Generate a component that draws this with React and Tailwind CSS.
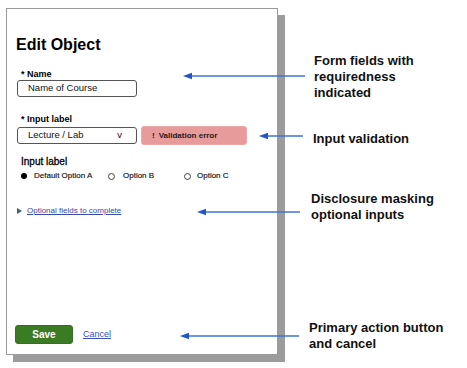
import React from "react";

function Arrow({ x1, x2, y }) {
  return (
    <g>
      <line x1={x1} y1={y} x2={x2 + 6} y2={y} stroke="#3d74d6" strokeWidth="1.3" />
      <polygon points={`${x2},${y} ${x2 + 9},${y - 3.2} ${x2 + 9},${y + 3.2}`} fill="#1f56c8" />
    </g>
  );
}

function Radio({ checked, label, width, gap }) {
  return (
    <div className={`flex items-center ${width}`}>
      {checked ? (
        <span className="block w-[6px] h-[6px] rounded-full bg-black" />
      ) : (
        <span className="block w-[7px] h-[7px] rounded-full border border-[#444] bg-white" />
      )}
      <span className={`${gap} text-[8px] leading-[12px] text-[#111] [-webkit-text-stroke:0.15px_#111]`}>{label}</span>
    </div>
  );
}

export default function App() {
  return (
    <div
      className="relative w-[467px] h-[368px] bg-white overflow-hidden"
      style={{ fontFamily: '"Liberation Sans", Arial, Helvetica, sans-serif' }}
    >
      <div className="pt-[8px] pl-[6px]">
        <div className="w-[272px] h-[347px] border border-[#9a9a9a] bg-white shadow-[7px_7px_0_#9c9c9c] flex flex-col pl-[9px] pt-[26px] pb-[10px]">
          <h1 className="text-[16px] leading-[20px] font-bold text-black">Edit Object</h1>

          <div className="mt-[13px] ml-[5px] text-[9px] leading-[12px] font-bold text-black">* Name</div>
          <div className="ml-px w-[120px] h-[17px] border border-[#555] rounded-[3px] flex items-center pl-[10px] text-[9.5px] text-[#111]">
            Name of Course
          </div>

          <div className="mt-[16px] ml-[5px] text-[9px] leading-[12px] font-bold text-black">* Input label</div>
          <div className="mt-px ml-px flex items-center gap-[4px]">
            <div className="w-[120px] h-[17px] border border-[#555] rounded-[3px] flex items-center pl-[10px] pr-[14px] text-[9.5px] text-[#111]">
              <span className="flex-1">Lecture / Lab</span>
              <span>v</span>
            </div>
            <div className="w-[106px] h-[19px] rounded-[3px] bg-[#e89b9b] border border-[#eaa8a8] flex items-center pl-[10px] text-[8px] font-bold text-[#2a1a1a]">
              <span>!</span>
              <span className="ml-[4px]">Validation error</span>
            </div>
          </div>

          <div className="mt-[11px] ml-[5px] text-[10px] leading-[12px] text-black [-webkit-text-stroke:0.3px_#000]">Input label</div>
          <div className="mt-[2px] ml-[5px] flex items-center">
            <Radio checked label="Default Option A" width="w-[87px]" gap="ml-[7px]" />
            <Radio label="Option B" width="w-[76px]" gap="ml-[8px]" />
            <Radio label="Option C" width="w-[60px]" gap="ml-[6px]" />
          </div>

          <div className="mt-[23px] ml-px flex items-center">
            <span className="block w-0 h-0 border-y-[3px] border-y-transparent border-l-[5px] border-l-[#3f6373]" />
            <a className="ml-[5px] text-[8px] leading-[12px] text-[#3949a8] underline">
              Optional fields to complete
            </a>
          </div>

          <div className="mt-auto ml-[-1px] flex items-center">
            <button className="w-[58px] h-[19px] rounded-[3px] bg-[#3b7b24] border border-[#35701f] text-white text-[10px] font-bold">
              Save
            </button>
            <a className="ml-[10px] text-[9px] text-[#3b4fbf] underline">Cancel</a>
          </div>
        </div>
      </div>

      <div className="absolute left-[314px] top-[53px] text-[13px] leading-[16px] font-bold text-[#111]">
        Form fields with<br />requiredness<br />indicated
      </div>
      <div className="absolute left-[313px] top-[131px] text-[13px] leading-[16px] font-bold text-[#111]">
        Input validation
      </div>
      <div className="absolute left-[311px] top-[191px] text-[13px] leading-[16px] font-bold text-[#111]">
        Disclosure masking<br />optional inputs
      </div>
      <div className="absolute left-[309px] top-[320px] text-[13px] leading-[16px] font-bold text-[#111]">
        Primary action button<br />and cancel
      </div>

      <svg className="absolute left-0 top-0" width="467" height="368" viewBox="0 0 467 368">
        <Arrow x1={305} x2={183} y={76} />
        <Arrow x1={303} x2={259} y={136} />
        <Arrow x1={300} x2={197} y={212} />
        <Arrow x1={299} x2={180} y={336} />
      </svg>
    </div>
  );
}
